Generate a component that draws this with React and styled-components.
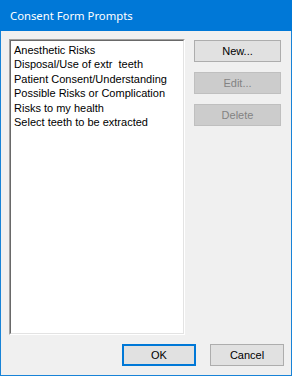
import React from 'react'
import styled, { createGlobalStyle } from 'styled-components';

//reset page so the dialog fills the window
const GlobalStyle = createGlobalStyle`
  html, body {
    margin: 0;
    padding: 0;
    background: #f0f0f0;
  }
  * { box-sizing: border-box; }
`;

const Window = styled.div`
  width: 292px;
  height: 376px;
  display: flex;
  flex-direction: column;
  border: 1px solid #1883d7;
  border-top: none;
  background: #f0f0f0;
  font-family: "Liberation Sans", Arial, sans-serif;
  font-size: 11px;
  color: #000;
`;

const TitleBar = styled.div`
  height: 31px;
  margin: 0 -1px;
  padding: 0 10px 1px;
  display: flex;
  align-items: center;
  background: #0078d7;
  color: #fff;
  font-family: "Noto Sans", "Open Sans", sans-serif;
  font-size: 11.3px;
`;

const Body = styled.div`
  flex: 1;
  display: grid;
  grid-template-columns: 176px 87px;
  grid-template-rows: 296px auto;
  column-gap: 9px;
  row-gap: 9px;
  padding: 8px 0 0 8px;
`;

//sunken 3d border like a winforms listbox
const ListOuter = styled.div`
  border: 1px solid;
  border-color: #a0a0a0 #fff #fff #a0a0a0;
`;

const List = styled.ul`
  height: 100%;
  margin: 0;
  padding: 2px 3px;
  list-style: none;
  background: #fff;
  border: 1px solid;
  border-color: #696969 #e3e3e3 #e3e3e3 #696969;
`;

const Item = styled.li`
  height: 14.4px;
  line-height: 14px;
  white-space: nowrap;
`;

const SideButtons = styled.div`
  display: flex;
  flex-direction: column;
  gap: 10px;
  padding-top: 1px;
`;

const Button = styled.button`
  width: ${p => p.w || 87}px;
  height: 22px;
  padding: 0;
  font: inherit;
  color: ${p => (p.disabled ? '#838383' : '#000')};
  background: ${p => (p.disabled ? '#cccccc' : '#e1e1e1')};
  border: ${p => (p.primary ? '2px solid #0078d7' : `1px solid ${p.disabled ? '#bfbfbf' : '#adadad'}`)};
  border-radius: 0;
`;

const Footer = styled.div`
  grid-column: 1 / span 2;
  display: flex;
  justify-content: flex-end;
  gap: 14px;
  margin-right: -3px;
`;

const items = [
  'Anesthetic Risks',
  'Disposal/Use of extr  teeth',
  'Patient Consent/Understanding',
  'Possible Risks or Complication',
  'Risks to my health',
  'Select teeth to be extracted',
];

function App() {
  return (
    <>
      <GlobalStyle />
      <Window>
        <TitleBar>Consent Form Prompts</TitleBar>
        <Body>
          <ListOuter>
            <List>
              {items.map(t => <Item key={t}>{t.replace('  ', '\u00a0 ')}</Item>)}
            </List>
          </ListOuter>
          <SideButtons>
            <Button>New...</Button>
            <Button disabled>Edit...</Button>
            <Button disabled>Delete</Button>
          </SideButtons>
          <Footer>
            <Button primary w={74}>OK</Button>
            <Button w={74}>Cancel</Button>
          </Footer>
        </Body>
      </Window>
    </>
  )
}

export default App
